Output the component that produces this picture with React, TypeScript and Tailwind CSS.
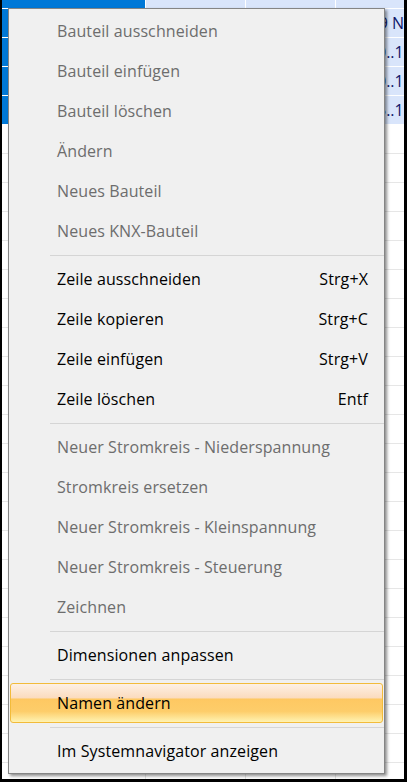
import React from 'react'

type Entry =
  | { kind: 'item'; label: string; shortcut?: string; disabled?: boolean; active?: boolean }
  | { kind: 'sep' }

const entries: Entry[] = [
  { kind: 'item', label: 'Bauteil ausschneiden', disabled: true },
  { kind: 'item', label: 'Bauteil einfügen', disabled: true },
  { kind: 'item', label: 'Bauteil löschen', disabled: true },
  { kind: 'item', label: 'Ändern', disabled: true },
  { kind: 'item', label: 'Neues Bauteil', disabled: true },
  { kind: 'item', label: 'Neues KNX-Bauteil', disabled: true },
  { kind: 'sep' },
  { kind: 'item', label: 'Zeile ausschneiden', shortcut: 'Strg+X' },
  { kind: 'item', label: 'Zeile kopieren', shortcut: 'Strg+C' },
  { kind: 'item', label: 'Zeile einfügen', shortcut: 'Strg+V' },
  { kind: 'item', label: 'Zeile löschen', shortcut: 'Entf' },
  { kind: 'sep' },
  { kind: 'item', label: 'Neuer Stromkreis - Niederspannung', disabled: true },
  { kind: 'item', label: 'Stromkreis ersetzen', disabled: true },
  { kind: 'item', label: 'Neuer Stromkreis - Kleinspannung', disabled: true },
  { kind: 'item', label: 'Neuer Stromkreis - Steuerung', disabled: true },
  { kind: 'item', label: 'Zeichnen', disabled: true },
  { kind: 'sep' },
  { kind: 'item', label: 'Dimensionen anpassen' },
  { kind: 'sep' },
  { kind: 'item', label: 'Namen ändern', active: true },
  { kind: 'sep' },
  { kind: 'item', label: 'Im Systemnavigator anzeigen' },
]

const rowText = ['', '9 N', '0..1', '0..1', '5..1']

function GridRow({ index }: { index: number }) {
  const selected = index < 5
  const height = index === 0 ? 'h-[9px]' : 'h-[29px]'
  const cellBorder = selected ? 'border-white' : 'border-[#e6e6e6]'
  return (
    <div className={`flex shrink-0 ${height}`}>
      <div className={`w-[143px] border-b ${cellBorder} ${selected ? 'bg-[#0078d7]' : 'bg-white'}`} />
      <div className={`w-[100px] border-b border-l ${cellBorder} ${selected ? 'bg-[#d9e5fb]' : 'bg-white'}`} />
      <div className={`w-[90px] border-b border-l ${cellBorder} ${selected ? 'bg-[#d9e5fb]' : 'bg-white'}`} />
      <div className={`flex-1 flex items-center border-b border-l ${cellBorder} ${selected ? 'bg-[#d9e5fb]' : 'bg-white'}`}>
        <span className={`${index === 1 ? 'ml-[53px]' : 'ml-[41px]'} whitespace-nowrap text-[16px] text-[#10186a]`}>
          {rowText[index] ?? ''}
        </span>
      </div>
    </div>
  )
}

export default function App() {
  return (
    <div
      className="relative w-[407px] h-[782px] overflow-hidden bg-black"
      style={{ fontFamily: '"Open Sans", "Noto Sans", sans-serif' }}
    >
      {/* background table */}
      <div className="absolute left-[2px] top-0 w-[402px] h-[779px] bg-white flex flex-col overflow-hidden">
        {Array.from({ length: 28 }).map((_, i) => (
          <GridRow key={i} index={i} />
        ))}
      </div>

      {/* context menu */}
      <div className="absolute left-[8px] top-[8px] w-[377px] border border-[#858585] bg-[#f0f0f0] py-[2px] shadow-[2px_2px_3px_rgba(0,0,0,0.45)]">
        {entries.map((e, i) =>
          e.kind === 'sep' ? (
            <div key={i} className="h-[8px] flex items-center pl-[41px]">
              <div className="h-px w-full bg-[#d5d5d5]" />
            </div>
          ) : (
            <div
              key={i}
              className={`h-[40px] flex items-center text-[16px] tracking-[0.1px] ${
                e.disabled ? 'text-[#6d6d6d]' : 'text-black'
              } ${
                e.active
                  ? 'mx-[1px] pl-[46px] pr-[14px] rounded-[3px] border border-[#f2bb3a] bg-[linear-gradient(to_bottom,#fdf0e4_0%,#fbdcbf_36%,#fec862_40%,#fdcd6a_72%,#fff3b2_100%)]'
                  : 'pl-[48px] pr-[16px]'
              }`}
            >
              <span className="flex-1 whitespace-nowrap">{e.label}</span>
              {e.shortcut && <span className="whitespace-nowrap">{e.shortcut}</span>}
            </div>
          )
        )}
      </div>
    </div>
  )
}
